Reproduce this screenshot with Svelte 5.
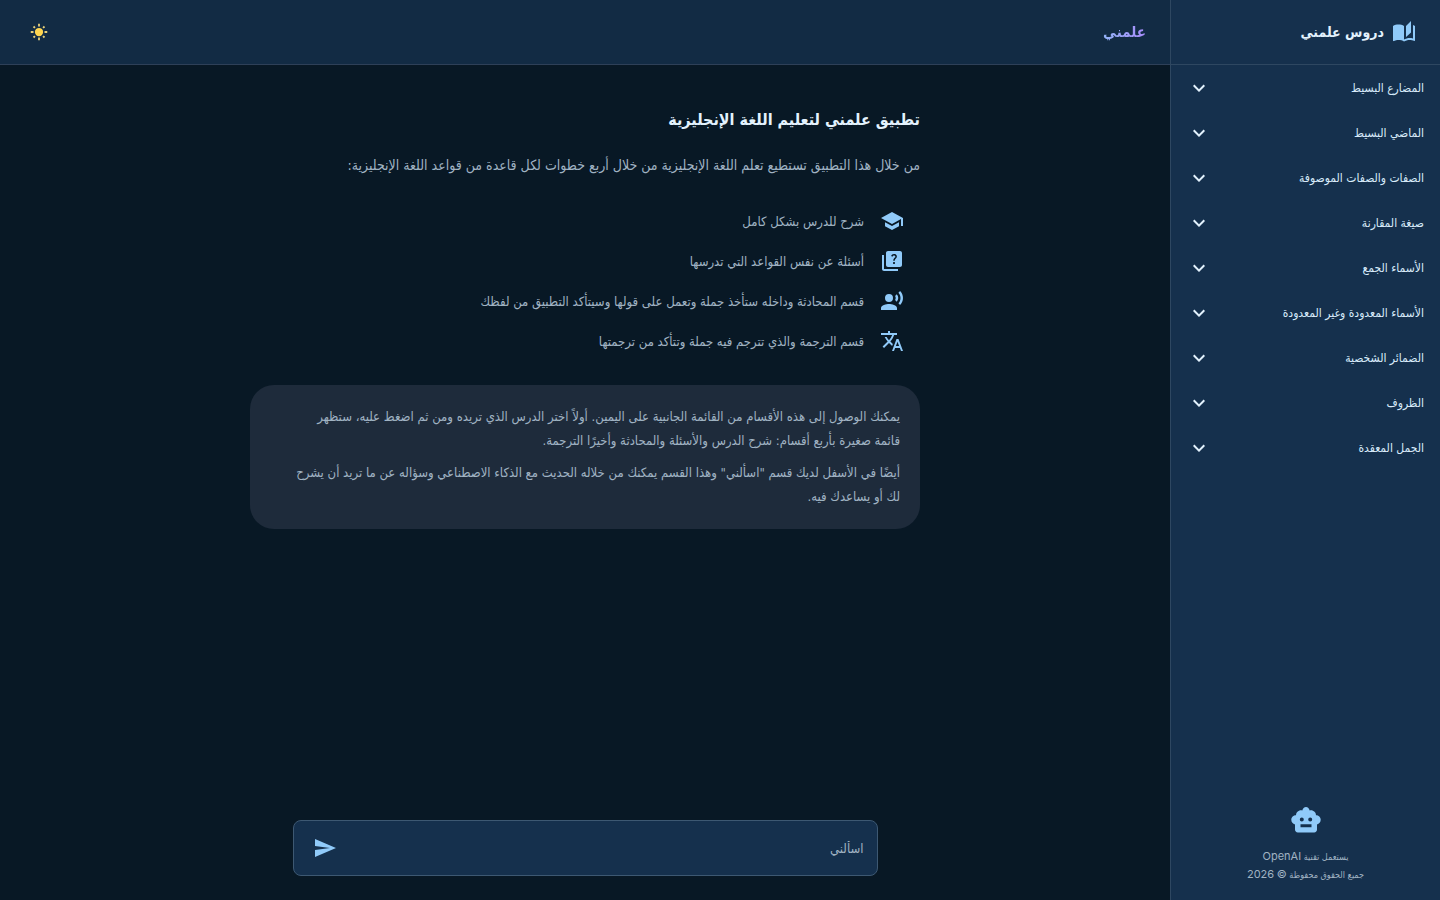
<script>
  let question = $state('');
  let openLesson = $state(null);

  const lessons = [
    'المضارع البسيط',
    'الماضي البسيط',
    'الصفات والصفات الموصوفة',
    'صيغة المقارنة',
    'الأسماء الجمع',
    'الأسماء المعدودة وغير المعدودة',
    'الضمائر الشخصية',
    'الظروف',
    'الجمل المعقدة'
  ];

  const sections = ['شرح الدرس', 'الأسئلة', 'المحادثة', 'الترجمة'];

  const steps = [
    {
      text: 'شرح للدرس بشكل كامل',
      icon: 'M5 13.18v4L12 21l7-3.82v-4L12 17l-7-3.82zM12 3 1 9l11 6 9-4.91V17h2V9L12 3z'
    },
    {
      text: 'أسئلة عن نفس القواعد التي تدرسها',
      icon: 'M4 6H2v14c0 1.1.9 2 2 2h14v-2H4V6zM20 2H8c-1.1 0-2 .9-2 2v12c0 1.1.9 2 2 2h12c1.1 0 2-.9 2-2V4c0-1.1-.9-2-2-2zm-5.99 13c-.59 0-1.05-.47-1.05-1.05 0-.59.47-1.04 1.05-1.04.59 0 1.04.45 1.04 1.04-.01.58-.45 1.05-1.04 1.05zm2.5-6.17c-.63.93-1.23 1.21-1.56 1.81-.13.24-.18.4-.18 1.18h-1.52c0-.41-.06-1.08.26-1.65.41-.73 1.18-1.16 1.63-1.8.48-.68.21-1.94-1.14-1.94-.88 0-1.32.67-1.5 1.23l-1.37-.57C11.51 5.96 12.52 5 13.99 5c1.23 0 2.08.56 2.51 1.26.37.61.58 1.73.01 2.57z'
    },
    {
      text: 'قسم المحادثة وداخله ستأخذ جملة وتعمل على قولها وسيتأكد التطبيق من لفظك',
      icon: 'M13 9a4 4 0 1 1-8 0 4 4 0 0 1 8 0zM9 15c-2.67 0-8 1.34-8 4v2h16v-2c0-2.66-5.33-4-8-4zm7.76-9.64-1.68 1.69c.84 1.18.84 2.71 0 3.89l1.68 1.69c2.02-2.02 2.02-5.07 0-7.27zM20.07 2l-1.63 1.63c2.77 3.02 2.77 7.56 0 10.74L20.07 16c3.9-3.89 3.91-9.95 0-14z'
    },
    {
      text: 'قسم الترجمة والذي تترجم فيه جملة وتتأكد من ترجمتها',
      icon: 'm12.87 15.07-2.54-2.51.03-.03c1.74-1.94 2.98-4.17 3.71-6.53H17V4h-7V2H8v2H1v1.99h11.17C11.5 7.92 10.44 9.75 9 11.35 8.07 10.32 7.3 9.19 6.69 8h-2c.73 1.63 1.73 3.17 2.98 4.56l-5.09 5.02L4 19l5-5 3.11 3.11.76-2.04zM18.5 10h-2L12 22h2l1.12-3h4.75L21 22h2l-4.5-12zm-2.62 7 1.62-4.33L19.12 17h-3.24z'
    }
  ];

  function toggle(i) {
    openLesson = openLesson === i ? null : i;
  }

  function ask(e) {
    e.preventDefault();
    question = '';
  }
</script>

<div class="app" dir="rtl" lang="ar">
  <aside>
    <div class="brand">
      <svg class="icon" viewBox="0 0 24 24" aria-hidden="true">
        <path d="M19 1l-5 5v11l5-4.5V1zM1 6v14.65c0 .25.25.5.5.5.1 0 .15-.05.25-.05C3.1 20.45 5.05 20 6.5 20c1.95 0 4.05.4 5.5 1.5V6c-1.45-1.1-3.55-1.5-5.5-1.5S2.45 4.9 1 6zm22 13.5V6c-.6-.45-1.25-.75-2-1v13.5c-1.1-.35-2.3-.5-3.5-.5-1.7 0-4.15.65-5.5 1.5v2c1.35-.85 3.8-1.5 5.5-1.5 1.65 0 3.35.3 4.75 1.05.1.05.15.05.25.05.25 0 .5-.25.5-.5v-1.1z" />
      </svg>
      <h2>دروس علمني</h2>
    </div>

    <nav>
      {#each lessons as lesson, i}
        <button class="lesson" aria-expanded={openLesson === i} onclick={() => toggle(i)}>
          <span>{lesson}</span>
          <svg class="chevron" viewBox="0 0 24 24" aria-hidden="true">
            <path d="M16.59 8.59 12 13.17 7.41 8.59 6 10l6 6 6-6z" />
          </svg>
        </button>
        {#if openLesson === i}
          <ul class="sections">
            {#each sections as section}
              <li><a href="#lesson-{i}">{section}</a></li>
            {/each}
          </ul>
        {/if}
      {/each}
    </nav>

    <footer>
      <svg class="robot" viewBox="0 0 32 32" aria-hidden="true">
        <path fill-rule="evenodd" d="M16 3c1.800 0 3.300 1.500 3.700 3.600 1-.4 2.100-.3 3.200.1 2 .7 3.100 2.500 3.100 4.500v.1c2.600 0 4.700 2 4.700 4.500 0 2.300-1.600 4.200-3.700 4.600v5.100c0 1.600-1.200 2.900-2.800 2.900H7.800C6.200 28.400 5 27.100 5 25.500v-5.100c-2.100-.4-3.700-2.300-3.700-4.600 0-2.500 2.100-4.500 4.700-4.500v-.1c0-2 1.100-3.800 3.100-4.500 1.100-.4 2.200-.5 3.200-.1C12.700 4.500 14.200 3 16 3zM11.800 13.500a2 2 0 1 0 0 4 2 2 0 0 0 0-4zM20.200 13.500a2 2 0 1 0 0 4 2 2 0 0 0 0-4zM10.500 20.300v3h11v-3z" />
      </svg>
      <p>يستعمل تقنية <bdi>OpenAI</bdi></p>
      <p>جميع الحقوق محفوظة <bdi>©</bdi> <bdi>2026</bdi></p>
    </footer>
  </aside>

  <div class="page">
    <header>
      <h1>علمني</h1>
      <button class="theme" aria-label="الوضع الفاتح">
        <svg viewBox="0 0 24 24" aria-hidden="true">
          <circle cx="12" cy="12" r="4.500" />
          <path d="M12 3v3M12 18v3M3 12h3M18 12h3M6 6l1.600 1.600M16.400 16.400 18 18M6 18l1.600-1.600M16.400 7.600 18 6" />
        </svg>
      </button>
    </header>

    <main>
      <h2>تطبيق علمني لتعليم اللغة الإنجليزية</h2>
      <p class="intro">
        من خلال هذا التطبيق تستطيع تعلم اللغة الإنجليزية من خلال أربع خطوات لكل قاعدة من قواعد اللغة الإنجليزية:
      </p>

      <ul class="steps">
        {#each steps as step}
          <li>
            <svg class="icon" viewBox="0 0 24 24" aria-hidden="true"><path d={step.icon} /></svg>
            <span>{step.text}</span>
          </li>
        {/each}
      </ul>

      <div class="note">
        <p>
          يمكنك الوصول إلى هذه الأقسام من القائمة الجانبية على اليمين. أولاً اختر الدرس الذي تريده ومن ثم اضغط عليه، ستظهر<br />
          قائمة صغيرة بأربع أقسام: شرح الدرس والأسئلة والمحادثة وأخيرًا الترجمة.
        </p>
        <p>
          أيضًا في الأسفل لديك قسم "اسألني" وهذا القسم يمكنك من خلاله الحديث مع الذكاء الاصطناعي وسؤاله عن ما تريد أن يشرح<br />
          لك أو يساعدك فيه.
        </p>
      </div>
    </main>

    <form onsubmit={ask}>
      <input type="text" placeholder="اسألني" aria-label="اسألني" bind:value={question} />
      <button class="send" aria-label="إرسال">
        <svg class="icon" viewBox="0 0 24 24" aria-hidden="true">
          <path d="M2.010 21 23 12 2.010 3 2 10l15 2-15 2z" />
        </svg>
      </button>
    </form>
  </div>
</div>

<style>
  :global(body) {
    background: #081825;
  }

  .app {
    display: flex;
    min-height: 100vh;
    font-family: 'DejaVu Sans Condensed', 'DejaVu Sans', sans-serif;
    color: #a0b3c3;
    background: #081825;
  }

  h1, h2, p, ul {
    margin: 0;
    padding: 0;
  }

  ul {
    list-style: none;
  }

  button {
    font-family: inherit;
    color: inherit;
    background: none;
    border: none;
    cursor: pointer;
  }

  svg {
    display: block;
    flex-shrink: 0;
  }

  .icon {
    width: 24px;
    height: 24px;
    fill: #90caf9;
  }

  aside {
    display: flex;
    flex-direction: column;
    flex: 0 0 270px;
    box-sizing: border-box;
    background: #15304d;
    border-left: 1px solid #2e4761;
  }

  .brand {
    display: flex;
    align-items: center;
    gap: 8px;
    height: 64px;
    padding: 0 24px;
    border-bottom: 1px solid #2e4761;
  }

  .brand h2 {
    font-size: 14px;
    line-height: 24px;
    color: #e3f2fd;
  }

  nav {
    flex: 1;
  }

  .lesson {
    display: flex;
    align-items: center;
    justify-content: space-between;
    width: 100%;
    height: 45px;
    padding: 0 16px;
    font-size: 12px;
    color: #d8ebfa;
  }

  .chevron {
    width: 24px;
    height: 24px;
    fill: #e3f2fd;
  }

  .lesson[aria-expanded='true'] .chevron {
    transform: rotate(180deg);
  }

  .sections {
    padding: 0 32px 8px;
    font-size: 12px;
    line-height: 28px;
  }

  .sections a {
    color: #90caf9;
    text-decoration: none;
  }

  footer {
    display: flex;
    flex-direction: column;
    align-items: center;
    padding: 16px;
    font-size: 9px;
    line-height: 18px;
  }

  footer bdi {
    font-family: Inter, sans-serif;
    font-size: 11px;
    line-height: 1;
  }

  .robot {
    width: 32px;
    height: 32px;
    margin-bottom: 12px;
    fill: #90caf9;
  }

  .page {
    display: flex;
    flex-direction: column;
    flex: 1;
    min-width: 0;
  }

  header {
    display: flex;
    align-items: center;
    justify-content: space-between;
    height: 64px;
    padding: 0 24px;
    background: #122b44;
    border-bottom: 1px solid #2e4058;
  }

  header h1 {
    font-size: 15px;
    line-height: 28px;
    color: transparent;
    background: linear-gradient(to left, #a78bfa, #93b4f8);
    background-clip: text;
  }

  .theme {
    padding: 4px;
  }

  .theme svg {
    width: 22px;
    height: 22px;
    fill: #ffd54f;
    stroke: #e6cf7a;
    stroke-width: 2;
  }

  .theme circle {
    stroke: none;
  }

  main {
    flex: 1;
    box-sizing: border-box;
    width: 100%;
    max-width: 670px;
    margin: 0 auto;
    padding-top: 40px;
  }

  main h2 {
    font-size: 16px;
    line-height: 30px;
    color: #e3f2fd;
  }

  .intro {
    margin-top: 16px;
    font-size: 14px;
    line-height: 28px;
  }

  .steps {
    padding: 22px 16px 0;
  }

  .steps li {
    display: flex;
    align-items: center;
    gap: 16px;
    height: 40px;
    font-size: 13px;
  }

  .note {
    display: flex;
    flex-direction: column;
    gap: 8px;
    margin-top: 24px;
    padding: 20px;
    font-size: 13px;
    line-height: 24px;
    background: #1e2b3b;
    border-radius: 24px;
  }

  form {
    display: flex;
    align-items: center;
    box-sizing: border-box;
    width: 50%;
    height: 56px;
    margin: 0 auto 24px;
    padding: 0 13px;
    background: #15304d;
    border: 1px solid #3d5872;
    border-radius: 8px;
  }

  input {
    flex: 1;
    min-width: 0;
    padding: 0;
    font-family: inherit;
    font-size: 13px;
    color: #e3f2fd;
    background: none;
    border: none;
    outline: none;
  }

  input::placeholder {
    color: #a0b3c3;
    opacity: 1;
  }

  .send {
    padding: 6px;
  }
</style>
